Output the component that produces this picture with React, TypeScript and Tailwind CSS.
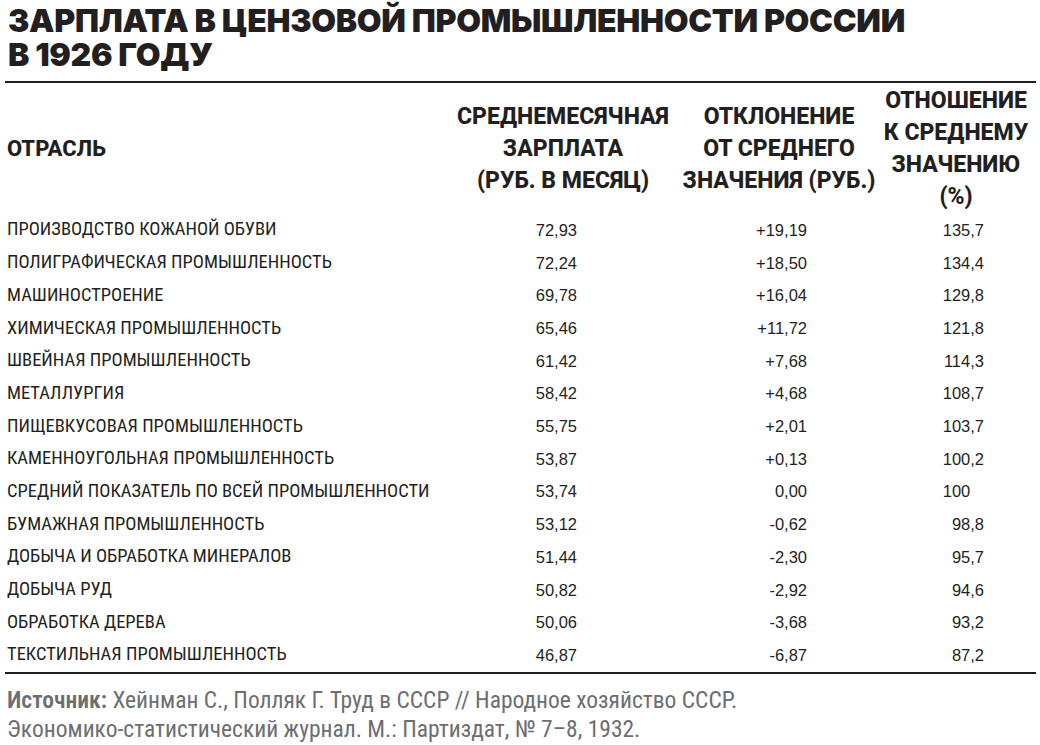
type Row = {
  name: string;
  salary: string;
  deviation: string;
  ratio: string;
};

const rows: Row[] = [
  { name: 'ПРОИЗВОДСТВО КОЖАНОЙ ОБУВИ', salary: '72,93', deviation: '+19,19', ratio: '135,7' },
  { name: 'ПОЛИГРАФИЧЕСКАЯ ПРОМЫШЛЕННОСТЬ', salary: '72,24', deviation: '+18,50', ratio: '134,4' },
  { name: 'МАШИНОСТРОЕНИЕ', salary: '69,78', deviation: '+16,04', ratio: '129,8' },
  { name: 'ХИМИЧЕСКАЯ ПРОМЫШЛЕННОСТЬ', salary: '65,46', deviation: '+11,72', ratio: '121,8' },
  { name: 'ШВЕЙНАЯ ПРОМЫШЛЕННОСТЬ', salary: '61,42', deviation: '+7,68', ratio: '114,3' },
  { name: 'МЕТАЛЛУРГИЯ', salary: '58,42', deviation: '+4,68', ratio: '108,7' },
  { name: 'ПИЩЕВКУСОВАЯ ПРОМЫШЛЕННОСТЬ', salary: '55,75', deviation: '+2,01', ratio: '103,7' },
  { name: 'КАМЕННОУГОЛЬНАЯ ПРОМЫШЛЕННОСТЬ', salary: '53,87', deviation: '+0,13', ratio: '100,2' },
  { name: 'СРЕДНИЙ ПОКАЗАТЕЛЬ ПО ВСЕЙ ПРОМЫШЛЕННОСТИ', salary: '53,74', deviation: '0,00', ratio: '100' },
  { name: 'БУМАЖНАЯ ПРОМЫШЛЕННОСТЬ', salary: '53,12', deviation: '-0,62', ratio: '98,8' },
  { name: 'ДОБЫЧА И ОБРАБОТКА МИНЕРАЛОВ', salary: '51,44', deviation: '-2,30', ratio: '95,7' },
  { name: 'ДОБЫЧА РУД', salary: '50,82', deviation: '-2,92', ratio: '94,6' },
  { name: 'ОБРАБОТКА ДЕРЕВА', salary: '50,06', deviation: '-3,68', ratio: '93,2' },
  { name: 'ТЕКСТИЛЬНАЯ ПРОМЫШЛЕННОСТЬ', salary: '46,87', deviation: '-6,87', ratio: '87,2' },
];

const grid = 'grid grid-cols-[440px_236px_196px_1fr]';
const num = "font-['Liberation_Sans',Arial,sans-serif] text-[16.5px] text-right";

export default function App() {
  return (
    <div className="min-h-[745px] w-[1040px] bg-white px-[5px] text-[#231f20]">
      <h1 className="pl-[3px] pt-[4px] pb-[9px] font-['Inter',sans-serif] text-[32px] leading-[34px] font-black tracking-[-0.3px]">
        <span className="block">ЗАРПЛАТА В ЦЕНЗОВОЙ ПРОМЫШЛЕННОСТИ РОССИИ</span>
        <span className="block">В 1926 ГОДУ</span>
      </h1>
      <div className="h-[2px] w-[1031px] bg-[#231f20]" />

      <div
        className={`${grid} pt-[2px] font-['Roboto',sans-serif] text-[23px] font-extrabold leading-[32px] [font-stretch:88%]`}
      >
        <div className="flex items-center pl-[2px] text-[22px]">ОТРАСЛЬ</div>
        <div className="flex items-center justify-center text-center">
          СРЕДНЕМЕСЯЧНАЯ
          <br />
          ЗАРПЛАТА
          <br />
          (РУБ. В МЕСЯЦ)
        </div>
        <div className="flex items-center justify-center text-center">
          ОТКЛОНЕНИЕ
          <br />
          ОТ СРЕДНЕГО
          <br />
          ЗНАЧЕНИЯ (РУБ.)
        </div>
        <div className="flex items-center justify-center text-center">
          ОТНОШЕНИЕ
          <br />
          К СРЕДНЕМУ
          <br />
          ЗНАЧЕНИЮ
          <br />
          (%)
        </div>
      </div>

      <div className="pt-[1px]">
        {rows.map((row) => (
          <div key={row.name} className={`${grid} h-[32.7px] items-center`}>
            <div className="pl-[2px] font-['Roboto_Condensed',sans-serif] text-[18.5px]">{row.name}</div>
            <div className={`${num} pr-[104px]`}>{row.salary}</div>
            <div className={`${num} pr-[70px]`}>{row.deviation}</div>
            <div className={`${num} pr-[51px]`}>
              {row.ratio}
              {!row.ratio.includes(',') && <span className="invisible">,0</span>}
            </div>
          </div>
        ))}
      </div>
      <div className="h-[2px] w-[1031px] bg-[#231f20]" />

      <p className="pl-[2px] pt-[12px] font-['Roboto_Condensed',sans-serif] text-[23.5px] leading-[29px] text-[#6d6e71]">
        <span className="font-semibold">Источник:</span> Хейнман С., Полляк Г. Труд в СССР // Народное хозяйство СССР.
        <br />
        Экономико-статистический журнал. М.: Партиздат, № 7–8, 1932.
      </p>
    </div>
  );
}
